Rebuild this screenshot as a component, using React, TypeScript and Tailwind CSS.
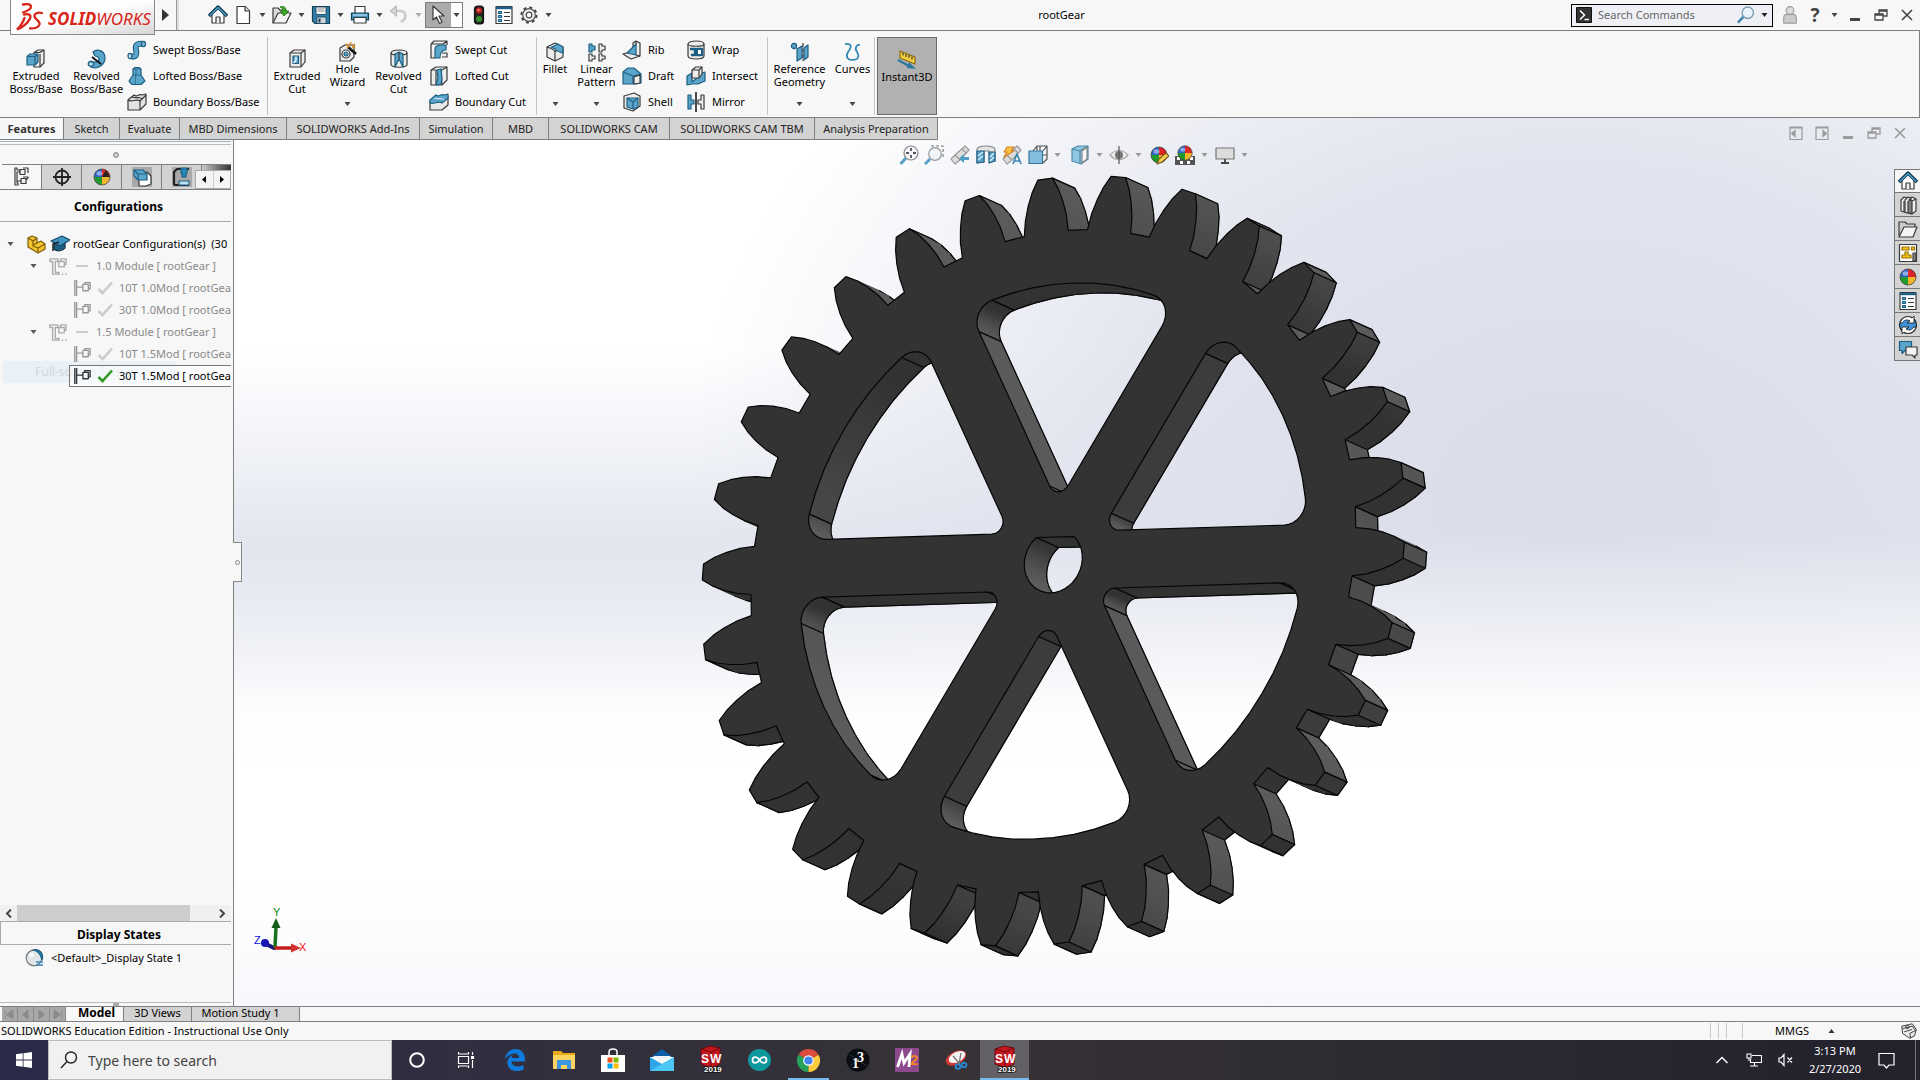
import React from "react";

type Kids = { children?: React.ReactNode };

const Ico = ({ children, size = 20, box = 20 }: Kids & { size?: number; box?: number }) => (
  <svg width={size} height={size} viewBox={`0 0 ${box} ${box}`} fill="none" stroke="#3a3a3a" strokeWidth="1.2" strokeLinejoin="round" className="shrink-0" aria-hidden="true">
    {children}
  </svg>
);

const Caret = ({ color = "#444" }: { color?: string }) => (
  <svg width="7" height="4" viewBox="0 0 7 4" className="shrink-0" aria-hidden="true">
    <path d="M0.5 0h6l-3 4z" fill={color} />
  </svg>
);

/* ---------- shared icons ---------- */
const HomeIcon = () => (
  <Ico>
    <path d="M4 9v9h12V9l-6-6z" fill="#fff" />
    <path d="M8 18v-6h4v6" fill="#eee" />
    <path d="M1 11 10 2l9 9" stroke="#123f58" strokeWidth="3.4" />
    <path d="M1.8 10.4 10 2.4l8.2 8" stroke="#4d9cc4" strokeWidth="1.4" />
  </Ico>
);
const Ball = () => (
  <>
    <g stroke="none">
      <path d="M10 10V2a8 8 0 0 0-8 8z" fill="#2f63c9" />
      <path d="M10 10V2a8 8 0 0 1 8 8z" fill="#dd2323" />
      <path d="M10 10H2a8 8 0 0 0 8 8z" fill="#1f9a2d" />
      <path d="M10 10h8a8 8 0 0 1-8 8z" fill="#f1b52b" />
      <ellipse cx="7.5" cy="6.5" rx="3" ry="2.2" fill="#fff" opacity=".45" />
    </g>
    <circle cx="10" cy="10" r="8" stroke="#444" strokeWidth=".8" />
  </>
);
const ListIcon = () => (
  <Ico>
    <rect x="2" y="1.5" width="16" height="17" fill="#fff" />
    <path d="M2 3h16" stroke="#1d6388" strokeWidth="2.4" />
    <path d="M10 7.5h6M10 11.5h6M10 15.5h6" />
    <path d="M4.5 6.5h3v2h-3zM4.5 10.5h3v2h-3zM4.5 14.5h3v2h-3z" fill="#5fb0d8" stroke="#1d6388" />
  </Ico>
);

/* ---------- title bar ---------- */
const titleTools: { label: string; icon: React.ReactNode; caret?: string; w: string }[] = [
  { label: "Home", w: "w-[25px]", icon: <HomeIcon /> },
  {
    label: "New",
    w: "w-[39px]",
    caret: "#444",
    icon: (
      <Ico>
        <path d="M4 1.5h8l4.5 4.5v12.5H4z" fill="#fff" />
        <path d="M12 1.5V6h4.5" fill="#ddd" />
      </Ico>
    ),
  },
  {
    label: "Open",
    w: "w-[39px]",
    caret: "#444",
    icon: (
      <Ico>
        <path d="M1 18V3h5l2 2h6v4" fill="#ddd" />
        <path d="M1 18 6 8h13l-5 10z" fill="#f3f3f3" />
        <path d="M8 2c4-2 6 1 6 4h3l-5 5-4-5h3c0-2-1-3-3-4z" fill="#3ea728" stroke="#226f14" strokeWidth=".8" />
      </Ico>
    ),
  },
  {
    label: "Save",
    w: "w-[39px]",
    caret: "#444",
    icon: (
      <Ico>
        <path d="M1.5 1.5h17v17H4l-2.500-2.500z" fill="#2f7ea8" stroke="#173f55" />
        <path d="M5 2h10v7.500H5z" fill="#f4f4f4" stroke="#173f55" strokeWidth=".8" />
        <path d="M6.500 4h7M6.500 6h7" stroke="#888" strokeWidth=".9" />
        <path d="M6 12h9v6.500H6z" fill="#cfd5d9" stroke="#173f55" strokeWidth=".8" />
        <path d="M7.500 13.500h2v4h-2z" fill="#173f55" stroke="none" />
      </Ico>
    ),
  },
  {
    label: "Print",
    w: "w-[39px]",
    caret: "#444",
    icon: (
      <Ico>
        <path d="M5 8V1.500h10V8" fill="#fff" />
        <path d="M1.500 8h17v7h-17z" fill="#4795bd" stroke="#173f55" />
        <path d="M4 12.500h12V18H4z" fill="#fff" />
        <path d="M3 10h14" stroke="#bfe0f1" />
      </Ico>
    ),
  },
  {
    label: "Undo",
    w: "w-[36px]",
    caret: "#aaa",
    icon: (
      <Ico>
        <path d="M3 6h8c7 0 7 8 1 11" stroke="#c9c9c9" strokeWidth="2.600" />
        <path d="M7.500 1 1.500 6l6 5z" fill="#d5d5d5" stroke="#bbb" />
      </Ico>
    ),
  },
];

const Logo = () => (
  <button className="relative z-10 ml-[10px] flex h-[35px] w-[145px] items-center gap-1 self-start border border-t-0 border-[#8a8a8a] bg-linear-to-br from-white via-[#fdfdfd] to-[#d6d6d6] pl-1" aria-label="SOLIDWORKS menu">
    <svg width="29" height="28" viewBox="0 0 29 28" fill="none" stroke="#d9261c" strokeWidth="2.300" strokeLinecap="round" className="shrink-0" aria-hidden="true">
      <path d="M8 1.500c5-1 8 0 8 2 0 2.500-5 5-8 6" />
      <path d="M9 11.500c5-1 7.500.5 6 4C13 20 7 25 2 26.500 6 23 8 19 9.500 15" />
      <path d="M27 10c-4-1-8 .5-7.500 3.500.5 3 6 4.500 5 8-.8 3-5.500 4.300-9.500 3.800" />
    </svg>
    <span className="mt-1 text-[17px] leading-5 text-[#d9261c] italic">
      <b>SOLID</b>WORKS
    </span>
  </button>
);

const WinBtns = ({ color, gap }: { color: string; gap: string }) => (
  <div className={`flex items-center ${gap}`} style={{ color }}>
    <button aria-label="Minimize">
      <svg width="14" height="14" viewBox="0 0 14 14"><path d="M2 10h10v3H2z" fill="currentColor" /></svg>
    </button>
    <button aria-label="Restore">
      <svg width="14" height="14" viewBox="0 0 14 14" fill="none" stroke="currentColor" strokeWidth="1.300">
        <path d="M1 6h8v6H1zM1 7h8M5 6V2h8v6H9M5 3h8" />
      </svg>
    </button>
    <button aria-label="Close">
      <svg width="14" height="14" viewBox="0 0 14 14" fill="none" stroke="currentColor" strokeWidth="1.600"><path d="m2 2 10 10M12 2 2 12" /></svg>
    </button>
  </div>
);

const TitleBar = () => (
  <header className="flex h-[31px] items-center border-b border-[#808080] bg-[#f7f7f7]">
    <Logo />
    <button className="px-[7px]" aria-label="Expand menu">
      <svg width="7" height="12" viewBox="0 0 7 12"><path d="M0 0v12l7-6z" fill="#333" /></svg>
    </button>
    <div className="h-full w-[3px] border-l border-[#999] bg-[#ddd]" />
    <div className="ml-[29px] flex items-center">
      {titleTools.map((t) => (
        <div key={t.label} className={`flex items-center gap-1.5 ${t.w}`}>
          <button aria-label={t.label}>{t.icon}</button>
          {t.caret && <Caret color={t.caret} />}
        </div>
      ))}
      <div className="flex h-[26px] border border-[#7c7c7c]">
        <button className="flex w-6 items-center justify-center bg-[#ababab]" aria-label="Select">
          <Ico size={20}><path d="M5 1v14l3.500-3 3 6.500 2.500-1.200-3-6.300H16z" fill="#fff" /></Ico>
        </button>
        <button className="flex w-3 items-center justify-center border-l border-[#aaa] bg-white" aria-label="Select options"><Caret /></button>
      </div>
      <button className="ml-1.5" aria-label="Rebuild">
        <Ico>
          <rect x="5.500" y="1" width="9" height="18" rx="3" fill="#222" stroke="#111" />
          <circle cx="10" cy="5.500" r="3" fill="#c4231a" stroke="none" />
          <circle cx="10" cy="14" r="3" fill="#35912c" stroke="none" />
          <circle cx="9.500" cy="5" r="1" fill="#f3a59c" stroke="none" />
        </Ico>
      </button>
      <button className="ml-[5px]" aria-label="File properties"><ListIcon /></button>
      <button className="ml-[5px] flex items-center gap-1.5" aria-label="Options">
        <Ico>
          <circle cx="10" cy="10" r="7.500" stroke="#444" strokeWidth="2.200" strokeDasharray="3 2.890" />
          <circle cx="10" cy="10" r="6.300" fill="#f1f1f1" stroke="#555" />
          <circle cx="10" cy="10" r="2.800" fill="#fff" stroke="#444" />
        </Ico>
        <Caret />
      </button>
    </div>
    <h1 className="flex-1 text-center text-[11px]">rootGear</h1>
    <div className="flex items-center pr-[6px]">
      <label className="flex h-[23px] w-[202px] items-center border border-black bg-[#eff0f5] pr-1 pl-1">
        <svg width="16" height="16" viewBox="0 0 16 16" className="shrink-0"><path d="M.5.500h15v15H.5z" fill="#333" stroke="#111" /><path d="m4 3.500 4.500 4.500L4 12.500M8.500 12.500H13" fill="none" stroke="#fff" strokeWidth="1.500" /></svg>
        <input className="ml-1.5 w-0 flex-1 bg-transparent text-[11px] outline-none placeholder:text-[#666]" placeholder="Search Commands" aria-label="Search Commands" />
        <Ico size={18}>
          <circle cx="12" cy="7.500" r="6.300" fill="#e9f4fb" stroke="#7d9db3" strokeWidth="1.600" />
          <path d="m7 12-6 6.500" stroke="#4586ad" strokeWidth="3" />
        </Ico>
        <span className="ml-1.5"><Caret color="#222" /></span>
      </label>
      <button className="ml-2" aria-label="Login">
        <Ico size={18}>
          <path d="M3 19v-6c0-4 3-4 7-4s7 0 7 4v6z" fill="#cbcbcb" stroke="#999" />
          <circle cx="10" cy="5" r="4.300" fill="#ddd" stroke="#999" />
        </Ico>
      </button>
      <button className="ml-2 flex items-center gap-2 text-[#444]" aria-label="Help">
        <span className="w-4 text-center text-[19px] leading-5 font-bold">?</span>
        <Caret />
      </button>
      <div className="ml-2.5"><WinBtns color="#444" gap="gap-3" /></div>
    </div>
  </header>
);

/* ---------- ribbon ---------- */
const B = "#5ba5cb";
const DB = "#1d5f82";
const icons: Record<string, React.ReactNode> = {
  extrude: <Ico><path d="M8 3.500 12 1h6v13l-4 4H8z" fill="#ececec" /><path d="M14 5v13M8 3.500h6L18 1" /><path d="M1 7.500 4 5h8v8l-3 3H1z" fill={B} stroke={DB} /><path d="M1 7.500h8V16M9 7.500 12 5" stroke={DB} /></Ico>,
  revolve: <Ico><path d="M6 3c5-4 12-1 12 6s-8 12-14 9c-3-2-3-5 0-6 3 2 8 1 8-2 0-2-3-3-4-3z" fill={B} stroke={DB} /><path d="m5 8 9 7" stroke="#111" strokeWidth="1.800" /><ellipse cx="4" cy="15" rx="2.800" ry="2.300" fill="#a9d5ea" stroke={DB} /></Ico>,
  sweep: <Ico><path d="M3 16c6 2 7-1 6-6-1-5 1-7 7-6" stroke={DB} strokeWidth="6" /><path d="M3 16c6 2 7-1 6-6-1-5 1-7 7-6" stroke={B} strokeWidth="3.800" /><ellipse cx="3" cy="16" rx="2" ry="2.600" fill="#b7dcee" stroke={DB} /><ellipse cx="16.500" cy="4" rx="2" ry="2.600" fill="#7dbcdb" stroke={DB} /></Ico>,
  loft: <Ico><path d="M6 3 8 1.500h4L14 3v6l4 6-4 3.500H5L2 15l4-6z" fill={B} stroke={DB} /><path d="M6 3h8M9 3v5l-1 10M6 9h8" stroke={DB} strokeWidth=".8" /></Ico>,
  boundary: <Ico><path d="M1 8 7 3c3 3 5-2 8 0l4-1v10l-6 6H1z" fill="#e3e3e3" /><path d="M1 8c4 3 8-2 12 1v9M13 9l6-6M5 5c3 2 8-1 10 2" /></Ico>,
  exCut: <Ico><path d="M3 4 7 1h11v12l-4 5H3z" fill="#ececec" /><path d="M3 4h11v14M14 4l4-3" /><path d="M6 7h5.500v7.500H6z" fill={B} stroke={DB} /><path d="M9 7.500v4L6.500 14" stroke="#fff" /></Ico>,
  hole: <Ico><path d="M2 6 7 3h9v12l-4 4H2z" fill="#ececec" /><circle cx="8" cy="12" r="4" fill="#fff" /><circle cx="8" cy="12" r="2" fill={B} stroke={DB} /><path d="m10 5 8 7" stroke="#111" strokeWidth="2.600" /><path d="m8 2 2 1M13 0l-1 3M17 2l-2 2M9 6l2-2M17 6l-3-1" stroke="#e08a12" strokeWidth="1.600" /></Ico>,
  revCut: <Ico><path d="M2 4c0-4 16-4 16 0v12c-2 3-14 3-16 0z" fill="#ececec" /><path d="M6 5 10 3l4 2v13l-4-8-4 8z" fill={B} stroke={DB} /><path d="M10 3v7M2 4c1 2 4 2 4 1M18 4c-1 2-4 2-4 1" /></Ico>,
  sweepCut: <Ico><path d="M2 4 5 1h13v4M2 4v14h4M2 4h12l4-3" fill="#e8e8e8" /><path d="M6 18V9c0-3 3-4 6-4h5v5c-3 0-6 2-6 8z" fill={B} stroke={DB} /><path d="M13 13h5v4h-5" fill="#eee" /></Ico>,
  loftCut: <Ico><path d="M2 4 7 1h11v13l-5 5H2z" fill="#ececec" /><path d="M2 4h5v15M13 4h-1l1 15M13 4l5-3" /><path d="m8 4 4-1 1 10-1 5-5 1 2-7z" fill={B} stroke={DB} /></Ico>,
  boundCut: <Ico><path d="M1 9v9h12l6-5V4l-6 4z" fill="#e8e8e8" /><path d="M1 8 7 3c3 3 5-2 8 0l4-1v4l-6 5c-4-3-8 2-12 0z" fill={B} stroke={DB} /><path d="M5 6c3 2 8-1 10 2" stroke="#c7e5f3" /></Ico>,
  fillet: <Ico><path d="M2 5 10 1l8 4v10l-8 4-8-4z" fill="#ececec" /><path d="M10 19V10c0-2-2-3-8-5M10 10c1-2 4-4 8-5" /><path d="M6 5.500 13 2l5 3v6l-6-2c-1-2-3-3-6-3.500z" fill={B} stroke={DB} /></Ico>,
  linear: <Ico><path d="M2 2h3v2h3v4H5v2H2z" fill={B} stroke={DB} /><path d="M12 2h3v2h3v4h-3v2h-3zM2 12h3v2h3v3H5v2H2zM12 12h3v2h3v3h-3v2h-3z" fill="#eee" /></Ico>,
  rib: <Ico><path d="m1 14 10-3V3l3-2 4 2v13l-9 3z" fill="#ececec" /><path d="M5 13 14 4v11z" fill={B} stroke={DB} /><path d="M14 4V1M14 15l4 1" /></Ico>,
  draft: <Ico><path d="M1 6 6 2h6l7 6v9l-5 1H1z" fill={B} stroke={DB} /><path d="m1 6 10 4v8M11 10l8-2" stroke={DB} /><path d="m12 11 6-2v8l-6 1z" fill="#f2f2f2" /></Ico>,
  shell: <Ico><path d="M2 4 12 1l6 3v10l-7 5-9-3z" fill="#ececec" /><path d="M5 6h11v9l-5 2-6-2z" fill={B} stroke={DB} /><path d="m16 6-5 4v7M11 10 5 6" stroke={DB} /></Ico>,
  wrap: <Ico><path d="M2 4c0-4 16-4 16 0v12c0 4-16 4-16 0z" fill="#ececec" /><path d="M2 4c0 3 16 3 16 0" /><path d="M4 9h5v6H5M11 9h5v6h-5z" stroke={DB} strokeWidth="2.400" /><path d="M12 10h3v4h-3z" fill="#fff" stroke="none" /></Ico>,
  intersect: <Ico><path d="m1 10 5-3v9l6-5V8l7-2v9l-7 3H6l-5 1z" fill={B} stroke={DB} /><path d="M6 4 10 1h6v7l-3 4H6z" fill="#ececec" /><path d="M6 4h7v8M13 4l3-3" /></Ico>,
  mirror: <Ico><path d="M2 3h3v5h3v4H5v5H2z" fill={B} stroke={DB} /><path d="M18 3h-3v5h-3v4h3v5h3z" fill="#eee" /><path d="M10 0v20" stroke="#111" strokeWidth="1.500" /></Ico>,
  refgeo: <Ico><circle cx="4" cy="4" r="2.600" fill={B} stroke={DB} /><path d="m7 7 5-3v12l-5 3zM14 6l4-3v12l-4 3z" fill={B} stroke={DB} /><path d="M13 1v18" strokeDasharray="4 1.500" /></Ico>,
  curves: <Ico><path d="M2 2c7-1 7 3 3 8-3 5 0 8 4 8 6 0 8-3 5-8-3-4 0-8 3-7" stroke="#2e86b3" strokeWidth="1.700" /></Ico>,
  instant: <Ico><path d="m3 1 15 6v7L3 8z" fill="#f6cf3e" stroke="#8a6a0c" /><path d="M6 2.500v3M9 4v3M12 5v3M15 6.500v3" /><path d="m1 10 11 6" stroke="#2c76a0" strokeWidth="2.400" /><path d="m12 12-2 6 9 1z" fill="#2c76a0" stroke="none" /></Ico>,
};

const Big = ({ icon, lines, w, caret, active }: { icon: string; lines: string[]; w: string; caret?: boolean; active?: boolean }) => (
  <button className={`flex h-[78px] ${w} shrink-0 flex-col items-center text-[11px] leading-[13px] ${caret ? "pt-[5px]" : "pt-3"} ${active ? "border border-[#6a6a6a] bg-[#b1b1b1]" : ""}`}>
    {icons[icon]}
    {lines.map((l) => (
      <span key={l} className="whitespace-nowrap">{l}</span>
    ))}
    {caret && <span className="mt-auto pb-[9px]"><Caret /></span>}
  </button>
);

const SmallCol = ({ items, w }: { items: [string, string][]; w: string }) => (
  <div className={`flex flex-col ${w} shrink-0`}>
    {items.map(([i, t]) => (
      <button key={t} className="flex h-[26px] items-center gap-1.5 text-[11px] whitespace-nowrap">
        {icons[i]}
        {t}
      </button>
    ))}
  </div>
);
const Sep = () => <div className="h-[78px] w-px shrink-0 bg-[#c4c4c4]" />;

const Ribbon = () => (
  <div className="flex h-[87px] items-start border-r border-b border-[#808080] bg-[#f7f7f7] pt-1.5 pl-1.5">
    <Big icon="extrude" lines={["Extruded", "Boss/Base"]} w="w-[60px]" />
    <Big icon="revolve" lines={["Revolved", "Boss/Base"]} w="w-[61px]" />
    <SmallCol w="w-[140px]" items={[["sweep", "Swept Boss/Base"], ["loft", "Lofted Boss/Base"], ["boundary", "Boundary Boss/Base"]]} />
    <Sep />
    <div className="w-[4px]" />
    <Big icon="exCut" lines={["Extruded", "Cut"]} w="w-[50px]" />
    <Big icon="hole" lines={["Hole", "Wizard"]} w="w-[51px]" caret />
    <Big icon="revCut" lines={["Revolved", "Cut"]} w="w-[51px]" />
    <div className="w-[5px]" />
    <SmallCol w="w-[107px]" items={[["sweepCut", "Swept Cut"], ["loftCut", "Lofted Cut"], ["boundCut", "Boundary Cut"]]} />
    <Sep />
    <Big icon="fillet" lines={["Fillet"]} w="w-[36px]" caret />
    <Big icon="linear" lines={["Linear", "Pattern"]} w="w-[47px]" caret />
    <div className="w-[2px]" />
    <SmallCol w="w-[64px]" items={[["rib", "Rib"], ["draft", "Draft"], ["shell", "Shell"]]} />
    <SmallCol w="w-[81px]" items={[["wrap", "Wrap"], ["intersect", "Intersect"], ["mirror", "Mirror"]]} />
    <Sep />
    <Big icon="refgeo" lines={["Reference", "Geometry"]} w="w-[63px]" caret />
    <Big icon="curves" lines={["Curves"]} w="w-[43px]" caret />
    <Sep />
    <div className="w-[2px]" />
    <Big icon="instant" lines={["Instant3D"]} w="w-[60px]" active />
  </div>
);

const tabs: [string, string][] = [
  ["Features", "w-[64px]"], ["Sketch", "w-[56px]"], ["Evaluate", "w-[60px]"], ["MBD Dimensions", "w-[107px]"], ["SOLIDWORKS Add-Ins", "w-[133px]"],
  ["Simulation", "w-[73px]"], ["MBD", "w-[56px]"], ["SOLIDWORKS CAM", "w-[121px]"], ["SOLIDWORKS CAM TBM", "w-[145px]"], ["Analysis Preparation", "w-[123px]"],
];

const TabRow = () => (
  <div className="flex h-[22px] shrink-0 items-start">
    <div role="tablist" aria-label="CommandManager" className="flex h-[22px] border-b border-[#808080]">
      {tabs.map(([t, w], i) => (
        <button key={t} role="tab" aria-selected={i === 0} className={`${w} border-r border-[#808080] pt-px text-[11px] whitespace-nowrap ${i === 0 ? "bg-[#f7f7f7] font-bold text-[#333]" : "bg-[#d3d3d3] text-[#222]"}`}>
          {t}
        </button>
      ))}
    </div>
    <div className="mt-2 ml-auto flex items-center gap-3 pr-[13px]">
      <button aria-label="Previous pane"><svg width="14" height="14" viewBox="0 0 14 14" fill="none" stroke="#9b9b9b" strokeWidth="1.200"><path d="M1 1h12v12.500H1zM1 2h12" /><path d="M6 4.500v6L2.500 7.500z" fill="#9b9b9b" /></svg></button>
      <button aria-label="Next pane"><svg width="14" height="14" viewBox="0 0 14 14" fill="none" stroke="#9b9b9b" strokeWidth="1.200"><path d="M1 1h12v12.500H1zM1 2h12" /><path d="M8 4.500v6l3.500-3z" fill="#9b9b9b" /></svg></button>
      <WinBtns color="#9b9b9b" gap="gap-3" />
    </div>
  </div>
);

/* ---------- left panel ---------- */
const panelTabs: { label: string; icon: React.ReactNode }[] = [
  { label: "ConfigurationManager", icon: <Ico><path d="M3 1v17h3v-2H5V5h3V3H5V1z" fill="#fff" /><path d="M8 2.500h5v5H8zM11 1h5v5M5 14h4M9 11.500h5v5H9zM14 13l2-2v-1h-5" fill="#eee" /></Ico> },
  { label: "DimXpertManager", icon: <Ico><circle cx="10" cy="10" r="6.500" stroke="#222" strokeWidth="1.800" /><path d="M10 1v18M1 10h18" stroke="#222" strokeWidth="1.800" /></Ico> },
  { label: "DisplayManager", icon: <Ico><Ball /><path d="M10 10 14 3l4 7z" fill="#222" stroke="none" /></Ico> },
  { label: "CAM Feature Tree", icon: <Ico><path d="M0 0h20v20H0z" fill="#a9a9a9" stroke="none" /><path d="M7 8 15 5l4 4v8l-5 2H7z" fill="#fff" /><path d="M2 3h9l4 4v6H6L2 9z" fill={B} stroke={DB} /><path d="m2 3 4 4h9M6 7v6" stroke={DB} /></Ico> },
  { label: "CAM Operation Tree", icon: <Ico><path d="M0 0h20v20H0z" fill="#a9a9a9" stroke="none" /><path d="M2 18V5l3-3h12M2 18h15" strokeWidth="2.200" stroke="#222" /><path d="M9 1h6v5l-1 1v3h-4V7L9 6z" fill="#2a84b8" stroke={DB} /><path d="M7 14h10v4H7z" fill="#bfe2f2" stroke={DB} /></Ico> },
];

const ConfigGroup = () => (
  <Ico size={18}><path d="M1 2h9v3H7v12h4v2H4V5H1z" fill="#f3f3f3" stroke="#aaa" strokeWidth="1.500" /><path d="M11 5h6v6h-6zM13 5V2h6v6h-2M10 19h2M14 19h2M18 19h2" stroke="#aaa" strokeWidth="1.500" /></Ico>
);
const ConfigLeaf = ({ c }: { c: string }) => (
  <Ico size={18}><path d="M2 1v18M4 1v18M4 9h7M11 6h6v7h-6zM13 6V4h6v7h-2" stroke={c} strokeWidth="1.500" /></Ico>
);
const Tick = ({ c }: { c: string }) => (
  <svg width="16" height="14" viewBox="0 0 16 14" className="shrink-0"><path d="m1.500 8 4 4L15 1.500" fill="none" stroke={c} strokeWidth="2.600" /></svg>
);

const Group = ({ t }: { t: string }) => (
  <div className="flex h-[22px] items-center pl-[30px]">
    <Caret color="#555" />
    <span className="ml-3"><ConfigGroup /></span>
    <span className="mr-2 ml-[9px] h-[2px] w-3 bg-[#ccc]" />
    <span className="text-[11px] whitespace-nowrap text-[#8a8a8a]">{t}</span>
  </div>
);
const Leaf = ({ t, active }: { t: string; active?: boolean }) => (
  <div className={`relative ml-[69px] flex h-[22px] items-center border-y border-l pl-[3px] ${active ? "border-[#777] bg-white/60" : "border-transparent"}`}>
    <ConfigLeaf c={active ? "#333" : "#999"} />
    <span className="mr-[6px] ml-[6px]"><Tick c={active ? "#2f9a24" : "#ccc"} /></span>
    <span className={`text-[11px] whitespace-nowrap ${active ? "text-black" : "text-[#8a8a8a]"}`}>{t}</span>
  </div>
);

const LeftPanel = () => (
  <aside className="flex w-[234px] shrink-0 flex-col border-r border-[#808080] bg-[#f7f7f7] pr-[2px]">
    <div className="h-[2px] border-b border-[#9fb4c0]" />
    <div className="mt-[2px] flex h-[20px] items-center justify-center border-t border-[#bbb]">
      <span className="h-[6px] w-[6px] rounded-full border border-[#888] bg-[#ccc]" />
    </div>
    <div role="tablist" aria-label="Manager panes" className="relative flex h-[26px] overflow-hidden border-b border-[#808080] pl-[2px]">
      {panelTabs.map((p, i) => (
        <button key={p.label} role="tab" aria-selected={i === 0} aria-label={p.label} className={`flex w-10 shrink-0 items-center justify-center border-t border-r border-[#808080] ${i === 0 ? "bg-[#f7f7f7]" : "bg-[#d3d3d3]"}`}>
          {p.icon}
        </button>
      ))}
      <div className="flex-1 border-t border-[#808080] bg-linear-to-r from-[#ccc] to-[#333]" />
      <div className="absolute right-0 bottom-0 flex h-[19px] w-9 border border-[#aaa] bg-[#f4f4f4]">
        <button className="flex flex-1 items-center justify-center border-r border-[#ccc]" aria-label="Scroll tabs left"><svg width="4" height="7"><path d="M4 0v7L0 3.500z" /></svg></button>
        <button className="flex flex-1 items-center justify-center" aria-label="Scroll tabs right"><svg width="4" height="7"><path d="M0 0v7l4-3.500z" /></svg></button>
      </div>
    </div>
    <h2 className="h-[32px] border-b border-[#aaa] pt-[8px] pl-[6px] text-center text-[12px] leading-[18px] font-bold">Configurations</h2>
    <div className="relative mt-[11px] flex-1 overflow-hidden">
      <div className="flex h-[22px] items-center pl-[7px]">
        <Caret color="#555" />
        <span className="ml-3 flex gap-1">
          <Ico><path d="M2 4 6 2l5 2v5l4-2 4 3v5l-7 4-10-6z" fill="#f2c531" stroke="#7d5c07" /><path d="m2 4 5 3v5l5 2v5M7 7l4-3M12 14l7-4M7 11l4-2" stroke="#7d5c07" /></Ico>
          <Ico><path d="M4 9v6c3 3 9 2 11-1V9" fill="#1d5f82" stroke="#134" /><path d="m1 7 11-5 8 4-10 6z" fill="#3f94c1" stroke="#174b68" /><path d="M9 8 3 10v7" stroke="#222" strokeWidth="1.500" /></Ico>
        </span>
        <span className="ml-[3px] text-[11px] whitespace-pre">{"rootGear Configuration(s)  (30"}</span>
      </div>
      <div className="absolute top-[128px] left-[3px] h-[22px] w-[173px] bg-[#e8f0f8] pl-8 text-[12px] leading-[22px] text-[#d3d8dc]">Full-screen Snip</div>
      <Group t="1.0 Module [ rootGear ]" />
      <Leaf t="10T 1.0Mod [ rootGea" />
      <Leaf t="30T 1.0Mod [ rootGea" />
      <Group t="1.5 Module [ rootGear ]" />
      <Leaf t="10T 1.5Mod [ rootGea" />
      <Leaf t="30T 1.5Mod [ rootGea" active />
    </div>
    <div className="flex h-4 items-center bg-[#f0f0f0]">
      <button className="flex w-[17px] justify-center" aria-label="Scroll left"><svg width="7" height="9" viewBox="0 0 7 9" fill="none" stroke="#444" strokeWidth="2"><path d="M6 .5 2 4.500l4 4" /></svg></button>
      <div className="h-full flex-1"><div className="h-full w-[88%] bg-[#cdcdcd]" /></div>
      <button className="flex w-[17px] justify-center" aria-label="Scroll right"><svg width="7" height="9" viewBox="0 0 7 9" fill="none" stroke="#444" strokeWidth="2"><path d="m1 .5 4 4-4 4" /></svg></button>
    </div>
    <h2 className="h-6 border border-r-0 border-[#aaa] pt-px pl-[6px] text-center text-[12px] leading-[24px] font-bold">Display States</h2>
    <div className="flex h-[58px] items-start gap-1.5 border-b border-[#bbb] pt-[3px] pl-[25px]">
      <Ico><circle cx="9" cy="10" r="7.800" fill="#dfe5e8" stroke="#777" /><path d="M8 2c7-2 11 4 9 10-1-5-4-9-9-10z" fill="#2f86b3" stroke={DB} /><ellipse cx="6.500" cy="7" rx="2.500" ry="2" fill="#fff" stroke="none" /><path d="M11 14h7M11 17h7" stroke="#2f86b3" strokeWidth="1.600" /></Ico>
      <span className="text-[11px] leading-5">&lt;Default&gt;_Display State 1</span>
    </div>
    <div className="flex h-[3px] justify-center"><span className="h-[3px] w-1.5 bg-[#aaa]" /></div>
  </aside>
);

/* ---------- gear model ---------- */
type P = [number, number];
type GP = { s: number; c: number; sharp?: boolean };
const O: P = [1053.3, 561.1];
const U: P = [-8.25, -382];
const V: P = [351.5, -51.1];
const D: P = [22.3, 10];
const rad = (d: number) => (d * Math.PI) / 180;
const polar = (r: number, deg: number, sharp = false): GP => ({ s: r * Math.sin(rad(deg)), c: r * Math.cos(rad(deg)), sharp });
const proj = (g: GP): P => [O[0] + g.c * U[0] + g.s * V[0], O[1] + g.c * U[1] + g.s * V[1]];

const rim: GP[] = [];
for (let k = 0; k < 30; k++) {
  const t = 12 * k;
  const flank: [number, number, boolean][] = [[0.86, 4.16, true], [0.9, 3.72, false], [0.937, 3.02, false], [0.97, 2.2, false], [1, 1.19, true]];
  flank.forEach(([r, a, s]) => rim.push(polar(r, t - a, s)));
  [...flank].reverse().forEach(([r, a, s]) => rim.push(polar(r, t + a, s)));
}

const arc = (center: GP, r: number, a0: number, a1: number, n: number): GP[] =>
  Array.from({ length: n + 1 }, (_, i) => {
    const q = polar(r, a0 + ((a1 - a0) * i) / n);
    return { s: center.s + q.s, c: center.c + q.c, sharp: i === 0 || i === n };
  });

const windowHole = (axis: number): GP[] => {
  const w = 0.075, f1 = 0.03, f2 = 0.056, R = 0.722;
  const ac = 30 - (Math.asin((w + f2) / (R - f2)) * 180) / Math.PI;
  return [
    ...arc({ s: 0, c: 0 }, R, axis - ac, axis + ac, 8),
    ...arc(polar(R - f2, axis + ac), f2, axis + ac, axis + 120, 8),
    ...arc(polar((w + f1) * 2, axis), f1, axis + 120, axis + 240, 8),
    ...arc(polar(R - f2, axis - ac), f2, axis + 240, axis + 360 - ac, 8),
  ]
    .filter((g, i, all) => i === 0 || Math.hypot(g.s - all[i - 1].s, g.c - all[i - 1].c) > 1e-6)
    .reverse();
};

const bore: GP[] = Array.from({ length: 31 }, (_, i) => polar(0.0825, 47.5 + (278 * i) / 30, i === 0 || i === 30)).reverse();
const holes = [0, 1, 2, 3, 4, 5].map((i) => windowHole(6 + 60 * i));
const contours: GP[][] = [rim, ...holes, bore];

type Wall = { key: string; quad: string; from: P; to: P; c0: string; c1: string; lines: string; depth: number };
const shift = (p: P): P => [p[0] + D[0], p[1] + D[1]];
const fmt = (p: P) => `${p[0].toFixed(1)},${p[1].toFixed(1)}`;
const edge = (p: P, q: P) => `M${fmt(p)}L${fmt(q)}`;
const normal = (g: GP, h: GP) => Math.atan2(-(h.c - g.c), h.s - g.s);
const near = (a: number, ref: number) => ref + Math.atan2(Math.sin(a - ref), Math.cos(a - ref));
const tone = (f: number) => {
  const l = Math.round(50 + 42 * Math.max(0, Math.cos(f - rad(50))));
  return `rgb(${l},${l},${l})`;
};

const walls: Wall[] = [];
contours.forEach((ct, ci) => {
  const n = ct.length;
  ct.forEach((g, i) => {
    const h = ct[(i + 1) % n];
    if (Math.hypot(h.s - g.s, h.c - g.c) < 1e-6) return;
    const a = proj(g), b = proj(h);
    const e: P = [b[0] - a[0], b[1] - a[1]];
    if (D[0] * e[1] - D[1] * e[0] <= 0) return;
    const phi = normal(g, h);
    const before = g.sharp ? phi : (phi + near(normal(ct[(i + n - 1) % n], g), phi)) / 2;
    const after = h.sharp ? phi : (phi + near(normal(h, ct[(i + 2) % n]), phi)) / 2;
    const k = (e[0] * D[0] + e[1] * D[1]) / (D[0] * D[0] + D[1] * D[1]);
    walls.push({
      key: `w${ci}-${i}`,
      quad: [a, b, shift(b), shift(a)].map(fmt).join(" "),
      from: a,
      to: [a[0] + e[0] - k * D[0], a[1] + e[1] - k * D[1]],
      c0: tone(before),
      c1: tone(after),
      lines: edge(shift(a), shift(b)) + (g.sharp ? edge(a, shift(a)) : "") + (h.sharp ? edge(b, shift(b)) : ""),
      depth: (a[0] + b[0]) * D[0] + (a[1] + b[1]) * D[1],
    });
  });
});
walls.sort((x, y) => x.depth - y.depth);
const facePath = contours.map((ct) => "M" + ct.map((g) => fmt(proj(g))).join("L") + "Z").join("");

const Scene = () => (
  <svg viewBox="234 140 1686 866" preserveAspectRatio="xMidYMid meet" className="absolute inset-0 h-full w-full" role="img" aria-label="rootGear model">
    <defs>
      {walls.map((w) => (
        <linearGradient key={w.key} id={w.key} gradientUnits="userSpaceOnUse" x1={w.from[0]} y1={w.from[1]} x2={w.to[0]} y2={w.to[1]}>
          <stop offset="0" stopColor={w.c0} />
          <stop offset="1" stopColor={w.c1} />
        </linearGradient>
      ))}
    </defs>
    <g strokeLinejoin="round" strokeLinecap="round">
      {walls.map((w) => (
        <g key={w.key}>
          <polygon points={w.quad} fill={`url(#${w.key})`} stroke={`url(#${w.key})`} strokeWidth="1.200" />
          <path d={w.lines} stroke="#050505" strokeWidth="1.200" />
        </g>
      ))}
      <path d={facePath} fill="#333333" fillRule="evenodd" stroke="#050505" strokeWidth="1.200" />
    </g>
    <g strokeLinecap="round">
      <path d="M274 948 266 944" stroke="#15157a" strokeWidth="4" />
      <circle cx="265" cy="943" r="4" fill="#1717b5" />
      <path d="m275 947 1-20" stroke="#17701c" strokeWidth="3.500" />
      <path d="m276 918 4.500 10h-9z" fill="#145c18" />
      <path d="M276 948h16" stroke="#c41c1c" strokeWidth="3.500" />
      <path d="m301 948-10-4.500v9z" fill="#d43030" />
    </g>
    <g fontFamily="Liberation Sans" fontSize="11">
      <text x="273" y="916" fill="#0a8a0a">Y</text>
      <text x="299" y="951" fill="#f01010">X</text>
      <text x="254" y="944" fill="#1010e0">Z</text>
    </g>
  </svg>
);

const Lens = ({ children }: Kids) => (
  <Ico><circle cx="12" cy="8" r="7" fill="#f2f6f9" stroke="#888" />{children}<path d="m7 13-5.500 6" stroke="#5a9fc4" strokeWidth="3" /></Ico>
);
const scope = <><path d="m1 14 4-4L15 1l4 4-9 10-5 4z" fill="#ddd" stroke="#999" /><path d="m5 10 5 5M12 4l4 4" stroke="#999" /></>;

const viewTools: { label: string; w: string; icon: React.ReactNode; caret?: boolean }[] = [
  { label: "Zoom to fit", w: "w-[25px]", icon: <Lens><path d="M12 3v3M12 10v3M7 8h3M14 8h3" stroke="#555" strokeWidth="1.800" /></Lens> },
  { label: "Zoom to area", w: "w-[26px]", icon: <Ico><path d="M7 1h12v13" strokeDasharray="3 2" stroke="#777" /><circle cx="11" cy="9" r="6.300" fill="#eef4f8" stroke="#999" /><path d="m6 14-5 5" stroke="#5a9fc4" strokeWidth="3" /></Ico> },
  { label: "Previous view", w: "w-[26px]", icon: <Ico>{scope}<path d="M19 15h-5v3l-5-4.500L14 9v3h5z" fill="#4d9cc4" stroke="none" /></Ico> },
  { label: "Section view", w: "w-[26px]", icon: <Ico><path d="M1 4c2-4 16-4 18 0v12l-4 1V9h-2V6H8v11l-7 1z" fill="#e4e4e4" stroke="#888" /><path d="M1 6h7v11l-7 1zM13 7h6v9l-6 2z" fill={B} stroke={DB} /><path d="m2 11 5-4M2 15l5-4M14 12l4-4M14 16l4-4" stroke="#dff0f8" /></Ico> },
  { label: "Dynamic annotation views", w: "w-[26px]", icon: <Ico>{scope}<path d="M5 2h7L9 6h3L2 12l3-5H2z" fill="#f9c440" stroke="#d9822b" /><path d="m11 19 4-10 4 10M12.500 16h5" stroke="#3a88b2" strokeWidth="1.700" /></Ico> },
  { label: "View orientation", w: "w-[42px]", caret: true, icon: <Ico><path d="M5 6 9 1h10v13l-4 4M15 6l4-5M9 1v5M12 1v5M15 10h4" stroke="#555" /><path d="M1 6h13.500v12.500H1z" fill="#83bfdc" stroke="#35789c" /></Ico> },
  { label: "Display style", w: "w-[39px]", caret: true, icon: <Ico><path d="M2 4 8 1h10v13l-7 5-9-3z" fill="#8fc7e1" stroke="#4d88a6" /><path d="m2 4 8 2v13M10 6l8-5" stroke="#4d88a6" /><path d="m12 6 5-4v12l-5 4z" fill="#f5f5f5" stroke="#888" /></Ico> },
  { label: "Hide/show items", w: "w-[40px]", caret: true, icon: <Ico><path d="M1 10c5-6 13-6 18 0-5 6-13 6-18 0z" fill="#eee" stroke="#aaa" /><circle cx="10" cy="10" r="4" fill="#777" stroke="none" /><path d="M10 1v18" stroke="#555" /></Ico> },
  { label: "Edit appearance", w: "w-[26px]", icon: <Ico><Ball /><path d="m8 19 2-5 7-6 3 3-7 6z" fill="#f5d04f" stroke="#7a5b1e" /></Ico> },
  { label: "Apply scene", w: "w-[40px]", caret: true, icon: <Ico><path d="M0 11h20v9H0z" fill="#555" stroke="none" /><path d="M2 12h3v3H2zM15 12h3v3h-3zM5 16h3v3H5zM12 16h3v3h-3z" fill="#fff" stroke="none" /><g transform="translate(1 -1) scale(.9)"><Ball /></g></Ico> },
  { label: "View settings", w: "w-[40px]", caret: true, icon: <Ico><path d="M1 3h18v11H1z" fill="#ddd" stroke="#777" /><path d="M10 14v4M6 18h8" stroke="#444" strokeWidth="1.800" /></Ico> },
];

const ViewToolbar = () => (
  <div className="relative flex items-center justify-center pt-[5px]">
    {viewTools.map((v) => (
      <div key={v.label} className={`flex items-center ${v.w}`}>
        <button aria-label={v.label}>{v.icon}</button>
        {v.caret && <span className="ml-[6px]"><Caret color="#999" /></span>}
      </div>
    ))}
  </div>
);

const taskPane: [string, React.ReactNode][] = [
  ["SOLIDWORKS Resources", <HomeIcon />],
  ["Design Library", <Ico><path d="m3 5 3-3 3 1v15l-6-2z" fill="#eee" /><path d="m7 5 3-3 3 1v16l-6-2zM11 5l3-3 4 2v12l-4 3-3-1z" fill="#eee" /><path d="M14 6v13M14 6l4-2M14 6l-3-1M10 6v12M6 6v11" /></Ico>],
  ["File Explorer", <Ico><path d="M1 17V3h6l2 2h8v3" fill="#ccc" /><path d="M1 18 6 8h13l-4 10z" fill="#f5f5f5" /></Ico>],
  ["View Palette", <Ico><path d="M1.500 1.500h17v17h-17z" fill="#fff" /><path d="M4 4h7v3H4zM13.500 4h3v3h-3zM7 9h3v3h3v3H4v-3h3z" fill="#f2c218" stroke="#9a7408" /><path d="M15 10h3v8h-3z" fill="#888" /></Ico>],
  ["Appearances", <Ico><Ball /></Ico>],
  ["Custom Properties", <ListIcon />],
  ["3DEXPERIENCE", <Ico><circle cx="10" cy="10" r="8.500" fill="#3d93dc" stroke="#222" /><path d="M2 8c2-6 8-8 12-5l2-2v7h-7l3-2C9 4 6 5 4 8zM18 12c-2 6-8 8-12 5l-2 2v-7h7l-3 2c3 2 6 1 8-2z" fill="#fff" stroke="#222" strokeWidth=".9" /></Ico>],
  ["Forum", <Ico><path d="M1.500 2.500h12v9H7l-3 3v-3H1.500z" fill={B} stroke={DB} /><path d="M8 8h11v8h-2v3l-3-3H8z" fill="#f4f4f4" /></Ico>],
];

const Viewport = () => (
  <section className="relative flex min-w-0 flex-1 flex-col">
    <Scene />
    <ViewToolbar />
    <nav className="relative mt-1 ml-auto w-[26px] border-y border-l border-[#777]" aria-label="Task pane">
      {taskPane.map(([l, ic], i) => (
        <button key={l} aria-label={l} className={`flex w-full items-center justify-center ${i === 0 ? "h-[22px] bg-[#f7f7f7]" : "h-6 border-t border-[#777] bg-[#d3d3d3]"}`}>
          {ic}
        </button>
      ))}
    </nav>
    <button className="absolute top-[402px] left-[-1px] flex h-10 w-[9px] items-center justify-center border border-l-0 border-[#888] bg-[#f7f7f7]" aria-label="Collapse panel">
      <span className="h-[5px] w-[5px] rounded-full border border-[#888]" />
    </button>
  </section>
);

/* ---------- bottom bars ---------- */
const BottomTabs = () => (
  <div className="flex h-[16px] shrink-0 border-t border-b border-[#808080] bg-[#f7f7f7] pl-[2px]">
    <div className="flex h-[14px] bg-[#a8a8a8]">
      {["M3 2v9M11 2v9L4.500 6.500z", "M10 2v9L4.500 6.500z", "M5 2v9l5.500-4.500z", "M12 2v9M4 2v9l6.500-4.500z"].map((d) => (
        <button key={d} aria-label="Scroll sheet tabs" className="w-4 border-r border-[#8a8a8a]"><svg width="15" height="13" viewBox="0 0 15 13"><path d={d} fill="#8a8a8a" stroke="#8a8a8a" /></svg></button>
      ))}
    </div>
    <div role="tablist" aria-label="Document tabs" className="flex text-[12px] leading-[12px]">
      <button role="tab" aria-selected className="w-[58px] border-r border-[#808080] pb-0.5 pl-1 font-bold">Model</button>
      <button role="tab" aria-selected={false} className="w-[68px] border-r border-[#808080] bg-[#d3d3d3] pb-0.5 text-[11px]">3D Views</button>
      <button role="tab" aria-selected={false} className="w-[108px] border-r border-[#808080] bg-[#d3d3d3] pr-2.5 pb-0.5 text-[11px]">Motion Study 1</button>
    </div>
  </div>
);

const StatusBar = () => (
  <footer className="flex h-[18px] shrink-0 items-center bg-[#f7f7f7] pl-px text-[11px]">
    <span className="pt-px">SOLIDWORKS Education Edition - Instructional Use Only</span>
    <div className="ml-auto flex h-full items-center">
      <i className="mr-[7px] h-4 w-px bg-[#ccc]" />
      <i className="mr-[7px] h-4 w-px bg-[#ccc]" />
      <i className="mr-[15px] h-4 w-px bg-[#ccc]" />
      <i className="mr-8 h-4 w-px bg-[#ccc]" />
      <button className="flex items-center gap-[19px]">MMGS <span className="rotate-180"><Caret color="#333" /></span></button>
      <span className="mr-[3px] ml-[66px]"><Ico size={16}><path d="m1 4 13-3 5 7-2 8-6 3L2 13z" fill="#eee" /><path d="m2 7 12-3 4 5M4 11l10-3M12 19l-1-6 8-4" /><circle cx="8" cy="5" r="2" /></Ico></span>
    </div>
  </footer>
);

const SwIcon = () => (
  <svg width="24" height="30" viewBox="0 0 24 30">
    <path d="M2 4 11 1l10 2v16l-8 4-11-4z" fill="#c4161c" stroke="#6d0a0e" />
    <path d="m2 4 10 3 9-4M12 7v16" stroke="#6d0a0e" fill="none" />
    <text x="2" y="18" fontFamily="Liberation Sans" fontWeight="bold" fontSize="12" fill="#fff">S</text>
    <text x="11" y="18" fontFamily="Liberation Sans" fontWeight="bold" fontSize="12" fill="#fff">W</text>
    <text x="5" y="27" fontFamily="Liberation Sans" fontWeight="bold" fontSize="8" fill="#fff" stroke="#111" strokeWidth="1.600" paintOrder="stroke">2019</text>
  </svg>
);

const taskApps: { label: string; icon: React.ReactNode; line?: boolean; active?: boolean }[] = [
  { label: "Cortana", icon: <svg width="18" height="18" viewBox="0 0 18 18"><circle cx="9" cy="9" r="6.800" fill="none" stroke="#fff" strokeWidth="2" /></svg> },
  { label: "Task View", icon: <svg width="18" height="18" viewBox="0 0 18 18" fill="none" stroke="#fff" strokeWidth="1.200"><path d="M1.500 5.500h10v7h-10zM1.500 1v2h10V1M1.500 17v-2h10v2M15.500 1v3M15.500 9v8" /><path d="M14.500 5.500h2v2h-2z" fill="#fff" /></svg> },
  { label: "Edge", icon: <svg width="22" height="22" viewBox="0 0 22 22"><path d="M1 10C2 3 7 0 11.500 0 17.500 0 21 4.500 21 10v2.500H7.500C8 18 15 18.500 19.500 16v4.500C11 24.500 2.500 20.500 3.500 12.500 4 9 6 7 9 6c-1 1-1.500 2-1.500 3h7.500c0-6-8-6.500-14 1z" fill="#0f7bdc" /></svg> },
  { label: "File Explorer", icon: <svg width="22" height="20" viewBox="0 0 22 20"><path d="M0 1h8l2 2h12v16H0z" fill="#e8a917" /><path d="M0 5h22v14H0z" fill="#fbd55f" /><path d="M4 19v-9h14v9h-4v-4H8v4z" fill="#3c95e0" /></svg> },
  { label: "Microsoft Store", icon: <svg width="24" height="24" viewBox="0 0 24 24"><path d="M8 8V4c0-4 8-4 8 0v4" fill="none" stroke="#fff" strokeWidth="1.500" /><path d="M0 7h24v17H0z" fill="#fff" /><path d="M6.500 9.500h5v5h-5z" fill="#f25022" /><path d="M12.500 9.500h5v5h-5z" fill="#7fba00" /><path d="M6.500 15.500h5v5h-5z" fill="#00a4ef" /><path d="M12.500 15.500h5v5h-5z" fill="#ffb900" /></svg> },
  { label: "Mail", icon: <svg width="24" height="22" viewBox="0 0 24 22"><path d="M0 9 12 0l12 9z" fill="#0f5fa8" /><path d="M0 8h24v14H0z" fill="#2fa5ea" /><path d="M0 8h24L12 15z" fill="#fff" /><path d="M24 8v14H0z" fill="#4cc6f5" /><path d="M3 7h18l-9 7z" fill="#f4f4f4" /></svg> },
  { label: "SOLIDWORKS 2019 launcher", icon: <SwIcon /> },
  { label: "Arduino", icon: <svg width="23" height="22" viewBox="0 0 23 22"><ellipse cx="11.500" cy="11" rx="11.500" ry="11" fill="#0e979c" /><path d="M11.500 11C9 7 4.500 7.500 4.500 11s4.500 4 7 0 7-3.500 7 0-4.500 4-7 0z" fill="none" stroke="#fff" strokeWidth="1.800" /></svg> },
  { label: "Chrome", line: true, icon: <svg width="23" height="23" viewBox="0 0 24 24"><path d="M12 12 1.600 6A12 12 0 0 1 22.400 6z" fill="#dd4b3e" /><path d="M12 12V24A12 12 0 0 1 1.600 6z" fill="#26a35a" /><path d="M12 12 22.400 6A12 12 0 0 1 12 24z" fill="#fdcc3c" /><circle cx="12" cy="12" r="5.500" fill="#fff" /><circle cx="12" cy="12" r="4.300" fill="#4384f3" /></svg> },
  { label: "Processing", icon: <svg width="24" height="24" viewBox="0 0 24 24"><circle cx="12" cy="12" r="11.500" fill="#0a0d12" /><path d="m3 6 18 12M4 18 20 5" stroke="#26303c" /><text x="6" y="20" fontFamily="Liberation Serif" fontWeight="bold" fontSize="14" fill="#fff">1</text><text x="11" y="14" fontFamily="Liberation Serif" fontWeight="bold" fontSize="14" fill="#fff">3</text></svg> },
  { label: "M2", icon: <svg width="24" height="24" viewBox="0 0 24 24"><path d="M0 0h24v24H0z" fill="#8c4a8c" /><text x="15" y="17" fontFamily="Liberation Sans" fontWeight="bold" fontSize="15" fill="#f58220">2</text><path d="m2.500 19 4.500-13 2 9 6-9-1 13" fill="none" stroke="#fff" strokeWidth="2.800" /></svg> },
  { label: "Snipping Tool", icon: <svg width="24" height="24" viewBox="0 0 24 24" fill="none"><ellipse cx="12" cy="10" rx="11" ry="6.500" transform="rotate(-28 12 10)" fill="#cf3a33" /><ellipse cx="13" cy="9" rx="9" ry="5" transform="rotate(-28 13 9)" fill="#f3f3f3" /><path d="m9 8 7 8M17 5l-2 11" stroke="#777" strokeWidth="1.300" /><circle cx="14" cy="18.500" r="2.300" stroke="#2a86cc" strokeWidth="2" /><circle cx="20" cy="17" r="2.300" stroke="#2a86cc" strokeWidth="2" /></svg> },
  { label: "SOLIDWORKS 2019", icon: <SwIcon />, line: true, active: true },
];

const Taskbar = () => (
  <nav className="flex h-10 shrink-0 bg-linear-to-r from-[#2b2a47] via-[#363236] via-50% to-[#22212c] text-white" aria-label="Taskbar">
    <button className="flex w-12 items-center justify-center" aria-label="Start">
      <svg width="16" height="16" viewBox="0 0 16 16"><path d="m0 2.300 6.700-1v6.300H0zM7.500 1.200 16 0v7.600H7.500zM0 8.400h6.700v6.300L0 13.800zM7.500 8.400H16V16l-8.500-1.200z" fill="#fff" /></svg>
    </button>
    <label className="flex w-[344px] items-center border border-[#bbb] bg-[#f1f1f1] pl-[11px]">
      <svg width="18" height="18" viewBox="0 0 18 18" fill="none" stroke="#222" strokeWidth="1.400"><circle cx="11" cy="6.500" r="5.500" /><path d="m7 10.500-6 6.500" /></svg>
      <input className="ml-[10px] w-0 flex-1 bg-transparent text-[14px] outline-none placeholder:text-[#444]" placeholder="Type here to search" aria-label="Type here to search" />
    </label>
    <div className="flex">
      {taskApps.map((a) => (
        <button key={a.label} aria-label={a.label} className={`relative flex w-[49px] items-center justify-center ${a.active ? "bg-[#636166]" : ""}`}>
          {a.icon}
          {a.line && <span className={`absolute bottom-0 h-[2px] bg-[#76b9ed] ${a.active ? "inset-x-0" : "inset-x-1"}`} />}
        </button>
      ))}
    </div>
    <div className="ml-auto flex items-center">
      <button aria-label="Show hidden icons"><svg width="12" height="8" viewBox="0 0 12 8" fill="none" stroke="#fff" strokeWidth="1.400"><path d="m.5 7 5.500-5.500L11.500 7" /></svg></button>
      <button className="ml-[18px]" aria-label="Network"><svg width="16" height="14" viewBox="0 0 16 14" fill="none" stroke="#fff" strokeWidth="1.100"><path d="M6 2.500h9.500v7H4.500V6M4 13h8M8.500 9.500V13M1 1h4v4H1zM3 5v3" /></svg></button>
      <button className="ml-4" aria-label="Volume"><svg width="15" height="14" viewBox="0 0 15 14" fill="none" stroke="#fff" strokeWidth="1.200"><path d="M1 5h2l3-3.500v11L3 9H1zM9.500 4.500l4.500 5M14 4.500l-4.500 5" /></svg></button>
      <time className="ml-[14px] w-[56px] text-center text-[11px] leading-[18px]">3:13 PM 2/27/2020</time>
      <button className="ml-[15px]" aria-label="Notifications"><svg width="17" height="17" viewBox="0 0 17 17" fill="none" stroke="#fff" strokeWidth="1.200"><path d="M1 1.500h15V13h-5l-2.500 3L6 13H1z" /></svg></button>
      <div className="ml-5 h-full w-px bg-[#777]" />
      <div className="w-1" />
    </div>
  </nav>
);

export default function App() {
  return (
    <div className="flex h-screen flex-col overflow-hidden font-['Noto_Sans',sans-serif] text-black">
      <TitleBar />
      <Ribbon />
      <main className="flex min-h-0 flex-1 flex-col bg-[linear-gradient(to_bottom,rgba(255,255,255,0)_0%,rgba(255,255,255,0)_47%,rgba(255,255,255,0.95)_67%,#ffffff_73%,#ffffff_86%,#f6f8fb_100%),radial-gradient(ellipse_46%_72%_at_82%_40%,rgba(218,221,233,1)_0%,rgba(223,226,237,0.9)_50%,rgba(240,241,247,0)_100%),linear-gradient(to_bottom,#ffffff_0%,#ffffff_26%,#f0f2f7_38%,#dfe3ed_50%,#d9deea_60%,#e6e9f1_100%)]">
        <TabRow />
        <div className="flex min-h-0 flex-1">
          <LeftPanel />
          <Viewport />
        </div>
      </main>
      <BottomTabs />
      <StatusBar />
      <Taskbar />
    </div>
  );
}
